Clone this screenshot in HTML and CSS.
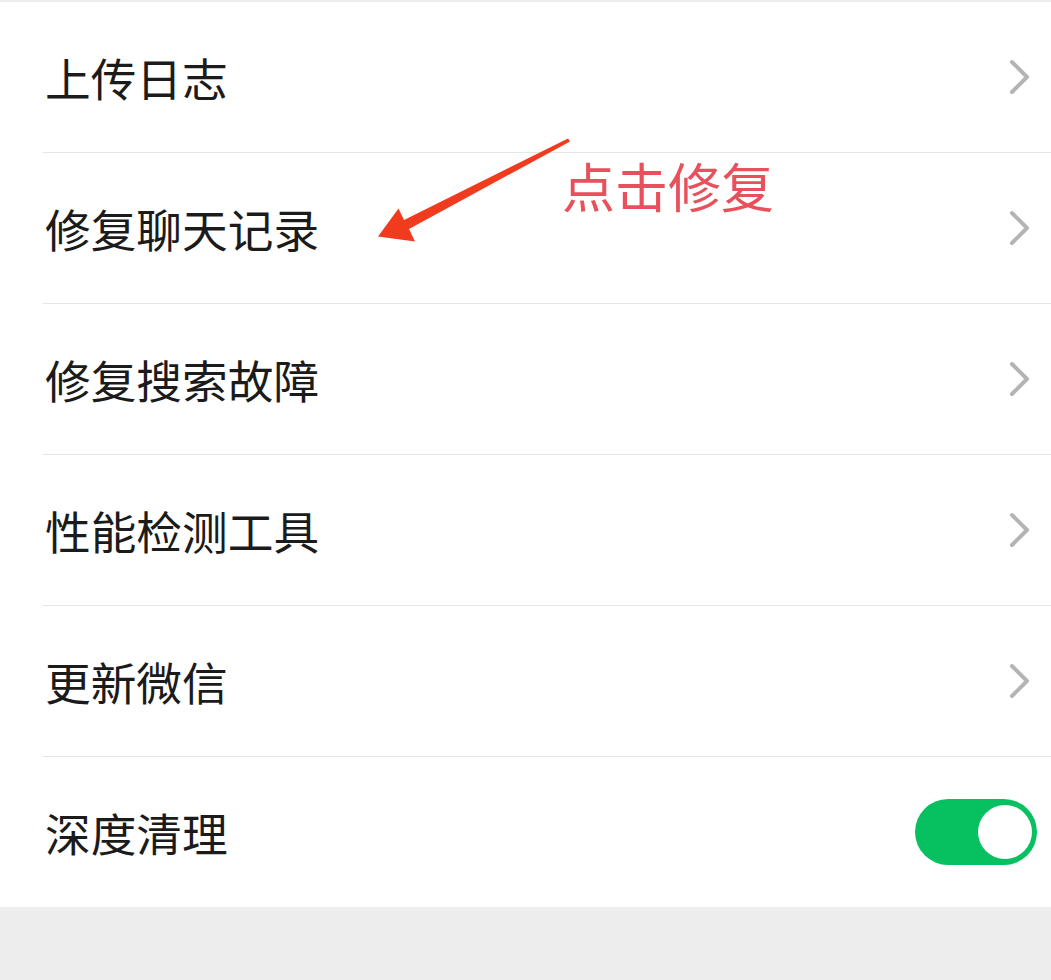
FILE: index.html
```html
<html>
<head>
  <meta charset="utf-8">
  <link rel="stylesheet" href="styles.css">
</head>

<body>
  <div class="page">
    <div class="list">
      <div class="row">
        <span class="label">上传日志</span>
        <svg class="chevron" viewBox="0 0 24 36"><polyline points="4,3 19,18 4,33" /></svg>
      </div>
      <div class="row">
        <span class="label">修复聊天记录</span>
        <svg class="chevron" viewBox="0 0 24 36"><polyline points="4,3 19,18 4,33" /></svg>
      </div>
      <div class="row">
        <span class="label">修复搜索故障</span>
        <svg class="chevron" viewBox="0 0 24 36"><polyline points="4,3 19,18 4,33" /></svg>
      </div>
      <div class="row">
        <span class="label">性能检测工具</span>
        <svg class="chevron" viewBox="0 0 24 36"><polyline points="4,3 19,18 4,33" /></svg>
      </div>
      <div class="row">
        <span class="label">更新微信</span>
        <svg class="chevron" viewBox="0 0 24 36"><polyline points="4,3 19,18 4,33" /></svg>
      </div>
      <div class="row">
        <span class="label">深度清理</span>
        <div class="switch"><div class="knob"></div></div>
      </div>
    </div>

    <svg class="arrow" width="1051" height="980" viewBox="0 0 1051 980">
      <polygon points="568,138.5 570,141.5 409,229 415,241.5 378,236.5 398.5,208.5 404,220" />
    </svg>
    <div class="note">点击修复</div>
  </div>
</body>

</html>
```

FILE: styles.css
```css
body {
  margin: 0;
  background: #ededed;
  font-family: "Noto Sans CJK SC", "Noto Sans", sans-serif;
}

.page {
  position: relative;
  width: 1051px;
  height: 980px;
  padding-top: 2px;
  box-sizing: border-box;
}

.list {
  background: #fff;
}

.row {
  display: flex;
  align-items: center;
  justify-content: space-between;
  height: 150px;
  margin-left: 43px;
  padding-right: 19px;
  border-bottom: 1px solid #e6e6e6;
}

.row:last-child {
  border-bottom: none;
  padding-right: 14px;
}

.label {
  font-size: 45.7px;
  color: #1b1b1b;
  padding-left: 2px;
}

.chevron {
  width: 24px;
  height: 36px;
  fill: none;
  stroke: #b4b4b4;
  stroke-width: 4;
  stroke-linecap: round;
  stroke-linejoin: round;
}

.switch {
  display: flex;
  justify-content: flex-end;
  align-items: center;
  width: 122px;
  height: 66px;
  padding-right: 5px;
  box-sizing: border-box;
  border-radius: 33px;
  background: #07c160;
}

.knob {
  width: 54px;
  height: 54px;
  border-radius: 50%;
  background: #fff;
}

.arrow {
  position: absolute;
  top: 0;
  left: 0;
  fill: #f03b1f;
}

.note {
  position: absolute;
  top: 159px;
  left: 562px;
  font-size: 53px;
  line-height: 1;
  color: #e8505b;
}
```
